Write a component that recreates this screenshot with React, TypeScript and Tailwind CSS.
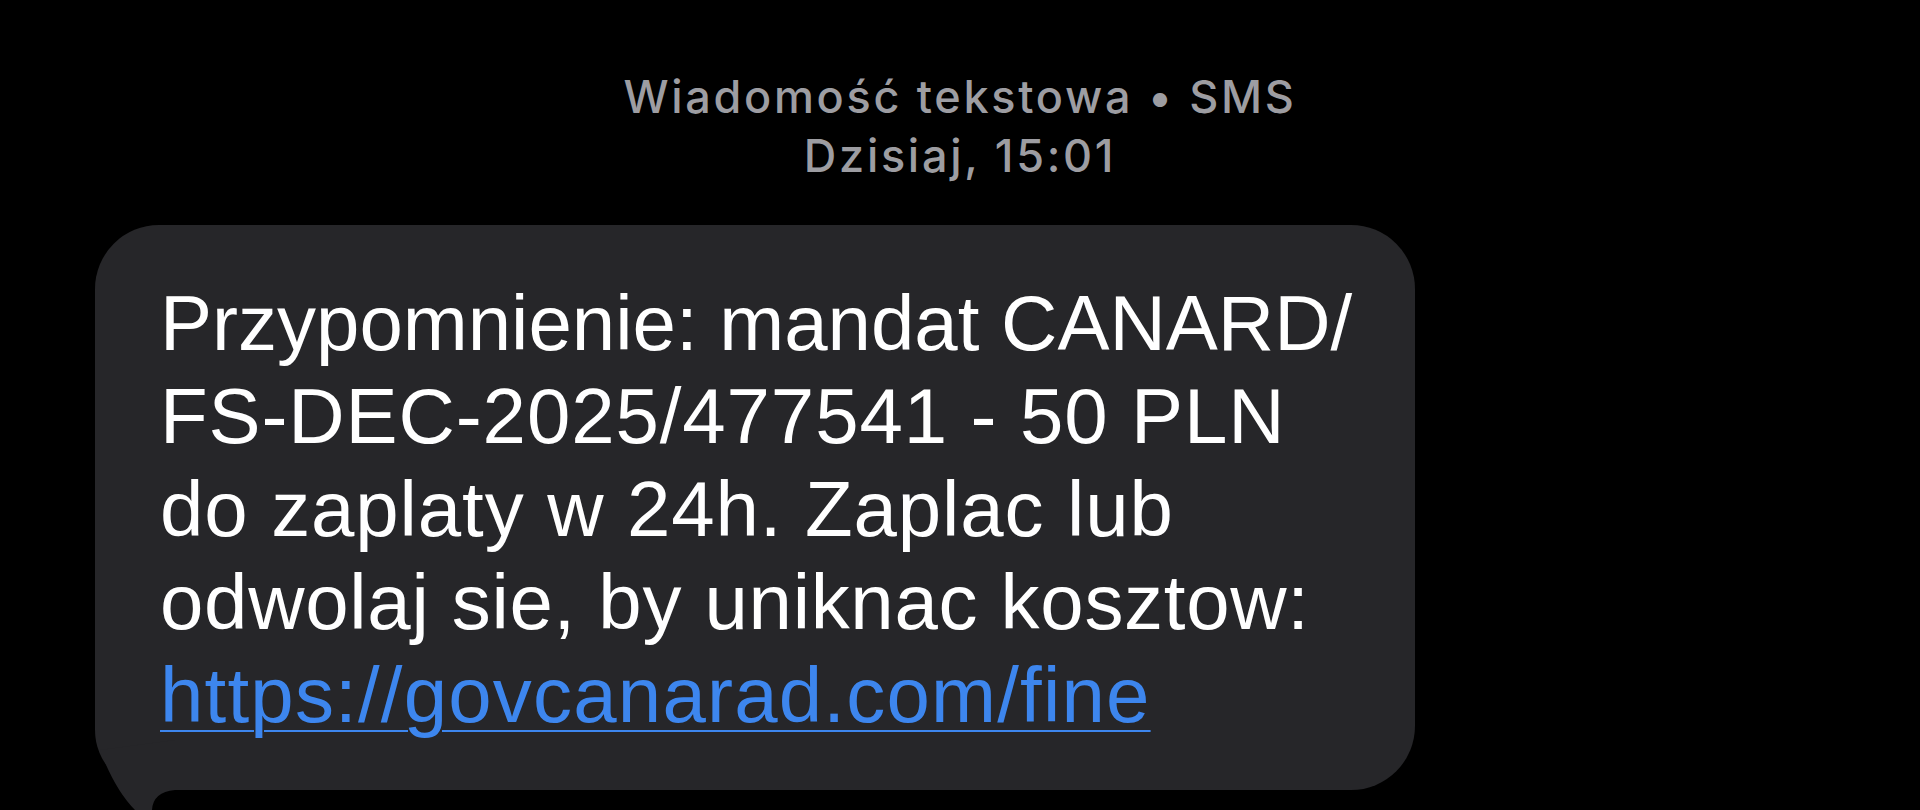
export default function App() {
  return (
    <div className="relative h-[810px] w-full overflow-hidden bg-black">
      <div className="pt-[67px] text-center font-['Inter','Liberation_Sans',sans-serif] text-[45px] font-medium leading-[59px] tracking-[2.7px] text-[#9d9da2]">
        <div>Wiadomość tekstowa • SMS</div>
        <div>Dzisiaj, 15:01</div>
      </div>

      <div className="relative ml-[95px] mt-[40px] w-[1320px]">
        <div className="rounded-[64px] rounded-bl-[60px] bg-[#262629] pb-[48px] pl-[65px] pt-[52px] font-['Liberation_Sans','Arial',sans-serif] text-[78px] leading-[93px] text-white">
          <div className="whitespace-nowrap">Przypomnienie: mandat CANARD/</div>
          <div className="whitespace-nowrap tracking-[0.9px]">FS-DEC-2025/477541 - 50 PLN</div>
          <div className="whitespace-nowrap tracking-[0.9px]">do zaplaty w 24h. Zaplac lub</div>
          <div className="whitespace-nowrap tracking-[0.7px]">odwolaj sie, by uniknac kosztow:</div>
          <div className="whitespace-nowrap tracking-[1.2px]">
            <a
              href="#"
              className="text-[#3d86ee] underline decoration-2 underline-offset-[8px]"
            >
              https://govcanarad.com/fine
            </a>
          </div>
        </div>
        {/* tail of the bubble */}
        <svg
          className="absolute left-0 top-[475px]"
          width="100"
          height="110"
          viewBox="0 0 100 110"
        >
          <path d="M5 50 Q20 90 40 110 L57 110 Q58 92 80 90 L80 40 Z" fill="#262629" />
        </svg>
      </div>
    </div>
  );
}
